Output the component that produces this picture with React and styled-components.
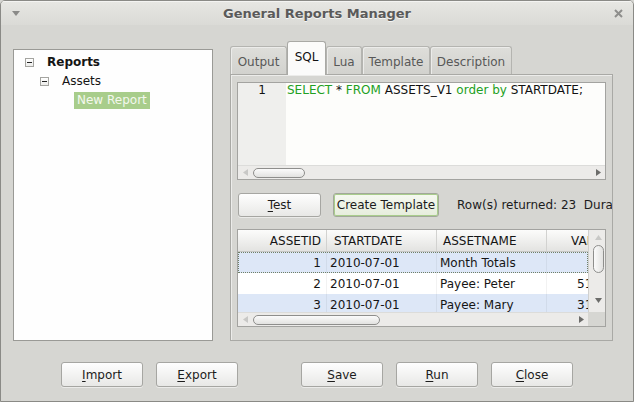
import React from 'react';
import styled, { createGlobalStyle, css } from 'styled-components';

const Global = createGlobalStyle`
  html, body { margin: 0; padding: 0; background: #d6d6d2; overflow: hidden; }
  body { font-family: "DejaVu Sans", "Liberation Sans", sans-serif; font-size: 12px; color: #1c1c1c; }
  * { box-sizing: border-box; }
`;

const Window = styled.div`
  width: 634px;
  height: 402px;
  border: 1px solid #8a8a86;
  border-radius: 5px 5px 0 0;
  background: #d6d6d2;
  display: flex;
  flex-direction: column;
  overflow: hidden;
`;

const TitleBar = styled.div`
  flex: none;
  height: 24px;
  display: grid;
  grid-template-columns: 30px 1fr 30px;
  align-items: center;
  background: linear-gradient(#e7e7e3, #dadad6);
  box-shadow: inset 0 1px 0 #f4f4f2;
`;

const TitleText = styled.div`
  text-align: center;
  font-weight: bold;
  font-size: 13px;
  color: #5a5a5a;
  text-shadow: 0 1px 0 #f6f6f4;
  padding-top: 1px;
`;

const TitleIcon = styled.div`
  display: flex;
  justify-content: center;
  align-items: center;
`;

const Body = styled.div`
  flex: none;
  height: 316px;
  display: flex;
  align-items: flex-start;
  padding: 16px 0 0 12px;
`;

const TreePanel = styled.div`
  margin-top: 8px;
  width: 200px;
  height: 292px;
  background: #fefefe;
  border: 1px solid #9a9a96;
  padding-top: 3px;
`;

const TreeRow = styled.div`
  height: 19px;
  display: flex;
  align-items: center;
  padding-left: ${p => 11 + p.$level * 15}px;
`;

const Expander = styled.div`
  width: 9px;
  height: 9px;
  margin-right: 10px;
  border: 1px solid ${p => (p.$empty ? 'transparent' : '#a4a4a0')};
  background: ${p => (p.$empty ? 'transparent' : 'linear-gradient(#ffffff, #ececea)')};
  display: flex;
  align-items: center;
  justify-content: center;
  &::after {
    content: '';
    display: ${p => (p.$empty ? 'none' : 'block')};
    width: 5px;
    height: 1px;
    background: #222;
  }
`;

const TreeLabel = styled.span`
  padding: 1px 3px;
  line-height: 15px;
  font-weight: ${p => (p.$bold ? 'bold' : 'normal')};
  color: ${p => (p.$selected ? '#f4f8ee' : '#151515')};
  background: ${p => (p.$selected ? '#a8cd8b' : 'transparent')};
`;

const RightColumn = styled.div`
  margin-left: 17px;
  width: 383px;
  height: 300px;
  display: flex;
  flex-direction: column;
`;

const TabBar = styled.div`
  flex: none;
  height: 33px;
  display: flex;
  align-items: flex-end;
  position: relative;
  z-index: 1;
`;

const Tab = styled.div`
  width: ${p => p.$w}px;
  display: flex;
  justify-content: center;
  align-items: center;
  border: 1px solid #b4b4b0;
  border-bottom: none;
  border-radius: 3px 3px 0 0;
  ${p =>
    p.$active
      ? css`
          height: 34px;
          margin-bottom: -1px;
          background: #fbfbfa;
          color: #111;
          padding-bottom: 3px;
          border-color: #a9a9a5;
        `
      : css`
          height: 28px;
          background: linear-gradient(#dededa, #d2d2ce);
          color: #585858;
          box-shadow: inset 1px 1px 0 #ececea;
          padding-top: 2px;
        `}
`;

const Pane = styled.div`
  flex: 1;
  border: 1px solid #a9a9a5;
  box-shadow: inset 1px 1px 0 #ececea;
  background: #d6d6d2;
  padding: 7px 6px;
  display: flex;
  flex-direction: column;
  overflow: hidden;
`;

const Editor = styled.div`
  flex: none;
  height: 98px;
  border: 1px solid #a3a3a0;
  display: flex;
  flex-direction: column;
  background: #fdfdfb;
`;

const EditorBody = styled.div`
  flex: 1;
  display: flex;
`;

const Gutter = styled.div`
  width: 48px;
  background: #efefed;
  text-align: right;
  padding-right: 20px;
  line-height: 15px;
  color: #111;
`;

const Code = styled.div`
  flex: 1;
  padding-left: 1px;
  line-height: 15px;
  white-space: pre;
  color: #111;
`;

const Kw = styled.span`
  color: #22a022;
`;

const HScroll = styled.div`
  flex: none;
  height: 14px;
  display: flex;
  align-items: center;
  background: #ecebe9;
  border-top: 1px solid #dcdcda;
`;

const VScroll = styled.div`
  display: flex;
  flex-direction: column;
  align-items: center;
  background: #ecebe9;
  border-left: 1px solid #d0d0ce;
  padding: 0 0 5px 2px;
`;

const ArrowCell = styled.div`
  flex: none;
  width: 14px;
  height: 14px;
  display: flex;
  align-items: center;
  justify-content: center;
`;

const Track = styled.div`
  flex: 1;
  display: flex;
  flex-direction: ${p => (p.$vertical ? 'column' : 'row')};
  align-items: center;
  align-self: stretch;
`;

const Thumb = styled.div`
  flex: none;
  border: 1px solid #8e8e8c;
  border-radius: 6px;
  background: linear-gradient(${p => (p.$vertical ? 'to right' : 'to bottom')}, #fbfbfb, #e2e2e0);
  ${p =>
    p.$vertical
      ? css`
          width: 11px;
          height: ${p.$size}px;
          margin-top: ${p.$offset}px;
        `
      : css`
          height: 10px;
          width: ${p.$size}px;
          margin-left: ${p.$offset}px;
        `}
`;

const ButtonRow = styled.div`
  flex: none;
  margin-top: 13px;
  height: 24px;
  display: flex;
  align-items: center;
  padding-left: 1px;
  white-space: nowrap;
`;

const Button = styled.div`
  flex: none;
  width: ${p => p.$w}px;
  height: ${p => p.$h || 24}px;
  margin-right: ${p => p.$gap || 0}px;
  display: flex;
  align-items: center;
  justify-content: center;
  border: 1px solid #a6a6a2;
  border-radius: 3px;
  background: linear-gradient(#fefefe, #e8e8e6);
  box-shadow: 0 1px 0 rgba(255, 255, 255, 0.5);
  color: #1c1c1c;
  ${p =>
    p.$default &&
    css`
      border-color: #a2a89a;
      background: linear-gradient(#f6f9f1, #e6eddc);
      box-shadow: inset 0 0 0 1px #a9cd8c;
    `}
`;

const Mn = styled.span`
  text-decoration: underline;
  text-underline-offset: 2px;
`;

const Status = styled.div`
  margin-left: 18px;
  white-space: pre;
  color: #1c1c1c;
`;

const Table = styled.div`
  flex: none;
  margin-top: 12px;
  height: 98px;
  border: 1px solid #a3a3a0;
  display: grid;
  grid-template-columns: 1fr 17px;
  grid-template-rows: 1fr 14px;
  background: #ffffff;
`;

const TableView = styled.div`
  overflow: hidden;
  display: flex;
  flex-direction: column;
`;

const HeaderRow = styled.div`
  flex: none;
  height: 22px;
  display: flex;
  background: linear-gradient(#fcfcfb, #e3e3e1);
  border-bottom: 1px solid #c6c6c4;
`;

const Row = styled.div`
  flex: none;
  height: 21px;
  display: flex;
  background: ${p => (p.$alt ? '#dde7f7' : '#ffffff')};
  ${p =>
    p.$focus &&
    css`
      outline: 1px dotted #6f7f66;
      outline-offset: -1px;
    `}
`;

const Cell = styled.div`
  flex: none;
  width: ${p => p.$w}px;
  display: flex;
  align-items: center;
  justify-content: ${p => (p.$right ? 'flex-end' : 'flex-start')};
  padding: ${p => (p.$right ? `0 ${p.$pad}px 0 0` : `0 0 0 ${p.$pad}px`)};
  border-right: 1px solid ${p => (p.$head ? '#d2d2d0' : 'rgba(0,0,0,0.05)')};
  white-space: nowrap;
  overflow: hidden;
  color: #151515;
`;

const Corner = styled.div`
  background: #d6d6d2;
`;

const Footer = styled.div`
  flex: none;
  display: flex;
  padding: 21px 0 0 60px;
`;

const Spacer = styled.div`
  width: 63px;
  flex: none;
`;

const Tri = ({ dir, color }) => {
  const pts = {
    left: '6,0 6,7 1,3.5',
    right: '1,0 1,7 6,3.5',
    up: '0,5 7,5 3.5,0',
    down: '0,0 7,0 3.5,5',
  }[dir];
  const horiz = dir === 'left' || dir === 'right';
  return (
    <svg width={7} height={horiz ? 7 : 5} viewBox={horiz ? '0 0 7 7' : '0 0 7 5'}>
      <polygon points={pts} fill={color} />
    </svg>
  );
};

const HScrollBar = ({ offset, size }) => (
  <HScroll>
    <ArrowCell><Tri dir="left" color="#c8c8c6" /></ArrowCell>
    <Track><Thumb $offset={offset} $size={size} /></Track>
    <ArrowCell><Tri dir="right" color="#6c6c6a" /></ArrowCell>
  </HScroll>
);

const VScrollBar = ({ offset, size }) => (
  <VScroll>
    <ArrowCell><Tri dir="up" color="#c8c8c6" /></ArrowCell>
    <Track $vertical><Thumb $vertical $offset={offset} $size={size} /></Track>
    <ArrowCell><Tri dir="down" color="#6c6c6a" /></ArrowCell>
  </VScroll>
);

const cols = [
  { key: 'id', title: 'ASSETID', w: 89, right: true, hp: 5, cp: 5 },
  { key: 'date', title: 'STARTDATE', w: 110, hp: 7, cp: 3 },
  { key: 'name', title: 'ASSETNAME', w: 110, hp: 6, cp: 3 },
  { key: 'val', title: 'VALUE', w: 90, hp: 24, cp: 30 },
];

const rows = [
  { id: '1', date: '2010-07-01', name: 'Month Totals', val: '' },
  { id: '2', date: '2010-07-01', name: 'Payee: Peter', val: '5120.00' },
  { id: '3', date: '2010-07-01', name: 'Payee: Mary', val: '3100.00' },
];

const tabs = [
  { label: 'Output', w: 57 },
  { label: 'SQL', w: 39, active: true },
  { label: 'Lua', w: 36 },
  { label: 'Template', w: 68 },
  { label: 'Description', w: 82 },
];

export default function App() {
  return (
    <>
      <Global />
      <Window>
        <TitleBar>
          <TitleIcon>
            <svg width="8" height="5" viewBox="0 0 8 5"><polygon points="0,0 8,0 4,5" fill="#8a8a88" /></svg>
          </TitleIcon>
          <TitleText>General Reports Manager</TitleText>
          <TitleIcon>
            <svg width="9" height="9" viewBox="0 0 9 9">
              <path d="M1 1 L8 8 M8 1 L1 8" stroke="#8e8e8c" strokeWidth="2" />
            </svg>
          </TitleIcon>
        </TitleBar>

        <Body>
          <TreePanel>
            <TreeRow $level={0}>
              <Expander />
              <TreeLabel $bold>Reports</TreeLabel>
            </TreeRow>
            <TreeRow $level={1}>
              <Expander />
              <TreeLabel>Assets</TreeLabel>
            </TreeRow>
            <TreeRow $level={2}>
              <Expander $empty />
              <TreeLabel $selected>New Report</TreeLabel>
            </TreeRow>
          </TreePanel>

          <RightColumn>
            <TabBar>
              {tabs.map(t => (
                <Tab key={t.label} $w={t.w} $active={t.active}>{t.label}</Tab>
              ))}
            </TabBar>
            <Pane>
              <Editor>
                <EditorBody>
                  <Gutter>1</Gutter>
                  <Code>
                    <Kw>SELECT</Kw> * <Kw>FROM</Kw> ASSETS_V1 <Kw>order by</Kw> STARTDATE;
                  </Code>
                </EditorBody>
                <HScrollBar offset={1} size={52} />
              </Editor>

              <ButtonRow>
                <Button $w={83} $gap={12}><span><Mn>T</Mn>est</span></Button>
                <Button $w={106} $default>Create Template</Button>
                <Status>Row(s) returned: 23  Duration: 0.001 seconds</Status>
              </ButtonRow>

              <Table>
                <TableView>
                  <HeaderRow>
                    {cols.map(c => (
                      <Cell key={c.key} $head $w={c.w} $right={c.right} $pad={c.hp}>{c.title}</Cell>
                    ))}
                  </HeaderRow>
                  {rows.map((r, i) => (
                    <Row key={r.id} $alt={i % 2 === 0} $focus={i === 0}>
                      {cols.map(c => (
                        <Cell key={c.key} $w={c.w} $right={c.right} $pad={c.cp}>{r[c.key]}</Cell>
                      ))}
                    </Row>
                  ))}
                </TableView>
                <VScrollBar offset={1} size={28} />
                <HScrollBar offset={1} size={127} />
                <Corner />
              </Table>
            </Pane>
          </RightColumn>
        </Body>

        <Footer>
          <Button $w={82} $h={25} $gap={13}><span><Mn>I</Mn>mport</span></Button>
          <Button $w={82} $h={25}><span><Mn>E</Mn>xport</span></Button>
          <Spacer />
          <Button $w={82} $h={25} $gap={13}><span><Mn>S</Mn>ave</span></Button>
          <Button $w={82} $h={25} $gap={13}><span><Mn>R</Mn>un</span></Button>
          <Button $w={82} $h={25}><span><Mn>C</Mn>lose</span></Button>
        </Footer>
      </Window>
    </>
  );
}
